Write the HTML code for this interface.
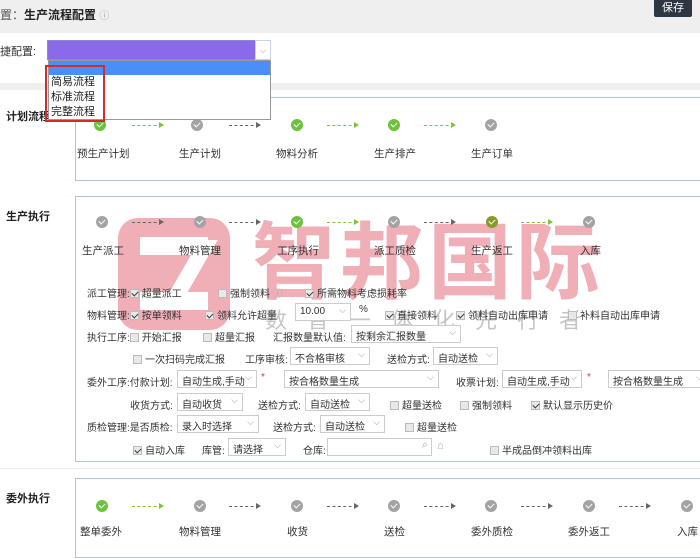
<!DOCTYPE html>
<html><head><meta charset="utf-8"><style>
*{margin:0;padding:0;box-sizing:border-box}
body{width:700px;height:544px;position:relative;overflow:hidden;background:#fff;font-family:"Liberation Sans","Noto Sans CJK SC",sans-serif;font-size:10px;color:#333}
.a{position:absolute;white-space:nowrap}
.n{position:absolute;width:12px;height:12px;border-radius:50%;background:#a3a3a3}
.n.g{background:#6cc23a}
.n::after{content:"";position:absolute;left:4px;top:2px;width:3px;height:5px;border:solid #fff;border-width:0 1.5px 1.5px 0;transform:rotate(45deg)}
.ar{position:absolute;width:30px;border-top:1px dashed #666}
.ar::after{content:"";position:absolute;right:-2px;top:-4px;border-left:5px solid #666;border-top:3.5px solid transparent;border-bottom:3.5px solid transparent}
.ar.g{border-color:#7cc43a}.ar.g::after{border-left-color:#7cc43a;border-top-color:transparent;border-bottom-color:transparent}
.box{position:absolute;left:75px;right:-2px;border:1px solid #a9c6dc}
.lb{font-size:11px;font-weight:bold;color:#222}
.cb{display:inline-block;width:9px;height:9px;border:1px solid #bbb;background:#e8e8e8;vertical-align:-1px;margin-right:3px;position:relative}
.cb.c::after{content:"";position:absolute;left:2px;top:0;width:3px;height:5px;border:solid #333;border-width:0 1.5px 1.5px 0;transform:rotate(45deg)}
.sel{position:absolute;height:18px;border:1px solid #ccc;background:#fff;padding:2px 4px;font-size:10px}
.sel::after{content:"⌵";position:absolute;right:4px;top:1px;color:#999;font-size:9px}
</style></head><body>
<div class="a" style="left:0;top:0;width:700px;height:33px;background:#efefef"></div>
<div class="a" style="left:0;top:6px;font-size:12px;font-weight:bold;color:#222"><span style="font-weight:normal;color:#555">置：</span>生产流程配置 <span style="font-weight:normal;color:#aaa;font-size:10px">ⓘ</span></div>
<div class="a" style="left:654px;top:0;width:38px;height:17px;background:#2e3642;color:#fff;font-size:11px;text-align:center;line-height:16px;border-radius:0 0 2px 2px">保存</div>
<div class="a" style="left:0;top:43px;font-size:11px">捷配置:</div>
<div class="a" style="left:47px;top:40px;width:224px;height:20px;background:#8a6ae8;border:1px solid #7a8fd6"></div>
<div class="a" style="left:255px;top:40px;width:16px;height:20px;background:#fff;border:1px solid #c9d3e8;color:#999;font-size:9px;text-align:center;line-height:18px">⌵</div>
<div class="a" style="left:0;top:83px;width:700px;height:7px;background:#efefef"></div>
<div class="box" style="top:97px;height:84px"></div>
<div class="a lb" style="left:6px;top:108px">计划流程</div>
<div class="n g" style="left:94px;top:119px"></div><div class="ar g" style="left:132px;top:125px"></div>
<div class="n" style="left:191px;top:119px"></div><div class="ar" style="left:229px;top:125px"></div>
<div class="n g" style="left:291px;top:119px"></div><div class="ar g" style="left:327px;top:125px"></div>
<div class="n g" style="left:388px;top:119px"></div><div class="ar g" style="left:424px;top:125px"></div>
<div class="n" style="left:485px;top:119px"></div>
<div class="a" style="left:77px;top:146px;font-size:10.5px">预生产计划</div>
<div class="a" style="left:179px;top:146px;font-size:10.5px">生产计划</div>
<div class="a" style="left:276px;top:146px;font-size:10.5px">物料分析</div>
<div class="a" style="left:374px;top:146px;font-size:10.5px">生产排产</div>
<div class="a" style="left:471px;top:146px;font-size:10.5px">生产订单</div>
<div class="a" style="left:48px;top:60px;width:223px;height:60px;background:#fff;border:1px solid #999"></div>
<div class="a" style="left:49px;top:61px;width:221px;height:14px;background:#4a8ef7"></div>
<div class="a" style="left:51px;top:75px;font-size:11px;line-height:15px;color:#222">简易流程<br>标准流程<br>完整流程</div>
<div class="a" style="left:45px;top:65px;width:60px;height:57px;border:2px solid #d62a2a"></div>

<div class="box" style="top:196px;height:266px"></div>
<div class="a lb" style="left:6px;top:208px">生产执行</div>
<div class="a" style="left:118px;top:218px;width:112px;height:112px;border-radius:20px;background:rgba(230,120,135,.6)"></div>
<div class="a" style="left:140px;top:237px;width:68px;height:18px;background:#fff"></div>
<div class="a" style="left:140px;top:292px;width:68px;height:18px;background:#fff"></div>
<div class="a" style="left:180px;top:240px;width:18px;height:68px;background:#fff;transform:skewX(-30deg)"></div>
<div class="a" style="left:252px;top:196px;font-size:84px;font-weight:bold;color:rgba(230,120,135,.6);letter-spacing:4px">智邦国际</div>
<div class="a" style="left:265px;top:303px;font-size:22px;color:rgba(150,150,150,.55);letter-spacing:20px">数智一体化先行者</div>
<div class="n" style="left:96px;top:216px"></div><div class="ar" style="left:132px;top:222px"></div>
<div class="n" style="left:194px;top:216px"></div><div class="ar" style="left:229px;top:222px"></div>
<div class="n g" style="left:291px;top:216px"></div><div class="ar g" style="left:327px;top:222px"></div>
<div class="n" style="left:388px;top:216px"></div><div class="ar" style="left:424px;top:222px"></div>
<div class="n g" style="left:486px;top:216px;background:#8a9a2a"></div><div class="ar g" style="left:521px;top:222px"></div>
<div class="n" style="left:583px;top:216px"></div>
<div class="a" style="left:82px;top:243px;font-size:10.5px">生产派工</div>
<div class="a" style="left:179px;top:243px;font-size:10.5px">物料管理</div>
<div class="a" style="left:277px;top:243px;font-size:10.5px">工序执行</div>
<div class="a" style="left:374px;top:243px;font-size:10.5px">派工质检</div>
<div class="a" style="left:471px;top:243px;font-size:10.5px">生产返工</div>
<div class="a" style="left:580px;top:243px;font-size:10.5px">入库</div>

<div class="a" style="left:87px;top:285px">派工管理:<span class="cb c"></span>超量派工</div>
<div class="a" style="left:218px;top:285px"><span class="cb"></span>强制领料 <span style="color:#aaa">ⓘ</span></div>
<div class="a" style="left:305px;top:285px"><span class="cb c"></span>所需物料考虑损耗率</div>
<div class="a" style="left:87px;top:307px">物料管理:<span class="cb c"></span>按单领料</div>
<div class="a" style="left:205px;top:307px"><span class="cb c"></span>领料允许超量</div>
<div class="sel" style="left:295px;top:303px;width:56px">10.00</div><div class="a" style="left:359px;top:304px">%</div>
<div class="a" style="left:385px;top:307px"><span class="cb c"></span>直接领料</div>
<div class="a" style="left:456px;top:307px"><span class="cb c"></span>领料自动出库申请</div>
<div class="a" style="left:568px;top:307px"><span class="cb"></span>补料自动出库申请</div>
<div class="a" style="left:87px;top:329px">执行工序:<span class="cb"></span>开始汇报</div>
<div class="a" style="left:203px;top:329px"><span class="cb"></span>超量汇报</div>
<div class="a" style="left:273px;top:329px">汇报数量默认值:</div>
<div class="sel" style="left:351px;top:325px;width:110px">按剩余汇报数量</div>
<div class="a" style="left:133px;top:351px"><span class="cb"></span>一次扫码完成汇报</div>
<div class="a" style="left:245px;top:351px">工序审核:</div>
<div class="sel" style="left:290px;top:347px;width:80px">不合格审核</div>
<div class="a" style="left:387px;top:351px">送检方式:</div>
<div class="sel" style="left:433px;top:347px;width:65px">自动送检</div>
<div class="a" style="left:87px;top:374px">委外工序:付款计划:</div>
<div class="sel" style="left:177px;top:370px;width:80px">自动生成,手动</div>
<div class="a" style="left:261px;top:372px;color:#d33">*</div>
<div class="sel" style="left:284px;top:370px;width:155px">按合格数量生成</div>
<div class="a" style="left:456px;top:374px">收票计划:</div>
<div class="sel" style="left:502px;top:370px;width:80px">自动生成,手动</div>
<div class="a" style="left:587px;top:372px;color:#d33">*</div>
<div class="sel" style="left:608px;top:370px;width:100px">按合格数量生成</div>
<div class="a" style="left:130px;top:397px">收货方式:</div>
<div class="sel" style="left:177px;top:393px;width:66px">自动收货</div>
<div class="a" style="left:258px;top:397px">送检方式:</div>
<div class="sel" style="left:305px;top:393px;width:65px">自动送检</div>
<div class="a" style="left:390px;top:397px"><span class="cb"></span>超量送检</div>
<div class="a" style="left:460px;top:397px"><span class="cb"></span>强制领料</div>
<div class="a" style="left:531px;top:397px"><span class="cb c"></span>默认显示历史价</div>
<div class="a" style="left:87px;top:419px">质检管理:是否质检:</div>
<div class="sel" style="left:177px;top:415px;width:82px">录入时选择</div>
<div class="a" style="left:273px;top:419px">送检方式:</div>
<div class="sel" style="left:320px;top:415px;width:65px">自动送检</div>
<div class="a" style="left:405px;top:419px"><span class="cb"></span>超量送检</div>
<div class="a" style="left:133px;top:442px"><span class="cb c"></span>自动入库</div>
<div class="a" style="left:202px;top:442px">库管:</div>
<div class="sel" style="left:228px;top:438px;width:58px">请选择</div>
<div class="a" style="left:303px;top:442px">仓库:</div>
<div class="a" style="left:327px;top:438px;width:105px;height:18px;border:1px solid #ccc;text-align:right;color:#aaa;padding-right:3px;font-size:11px">⌕</div>
<div class="a" style="left:437px;top:440px;color:#aaa;font-size:11px">⌂</div>
<div class="a" style="left:490px;top:442px"><span class="cb"></span>半成品倒冲领料出库</div>
<div class="a" style="left:0;top:468px;width:700px;height:1px;background:#eee"></div>

<div class="box" style="top:478px;height:80px"></div>
<div class="a lb" style="left:6px;top:490px">委外执行</div>
<div class="n g" style="left:96px;top:500px"></div><div class="ar g" style="left:132px;top:506px"></div>
<div class="n" style="left:194px;top:500px"></div><div class="ar" style="left:229px;top:506px"></div>
<div class="n" style="left:291px;top:500px"></div><div class="ar" style="left:327px;top:506px"></div>
<div class="n" style="left:388px;top:500px"></div><div class="ar" style="left:424px;top:506px"></div>
<div class="n" style="left:485px;top:500px"></div><div class="ar" style="left:521px;top:506px"></div>
<div class="n" style="left:583px;top:500px"></div><div class="ar" style="left:619px;top:506px"></div>
<div class="n" style="left:681px;top:500px"></div>
<div class="a" style="left:80px;top:524px;font-size:10.5px">整单委外</div>
<div class="a" style="left:179px;top:524px;font-size:10.5px">物料管理</div>
<div class="a" style="left:287px;top:524px;font-size:10.5px">收货</div>
<div class="a" style="left:384px;top:524px;font-size:10.5px">送检</div>
<div class="a" style="left:471px;top:524px;font-size:10.5px">委外质检</div>
<div class="a" style="left:568px;top:524px;font-size:10.5px">委外返工</div>
<div class="a" style="left:677px;top:524px;font-size:10.5px">入库</div>
</body></html>
